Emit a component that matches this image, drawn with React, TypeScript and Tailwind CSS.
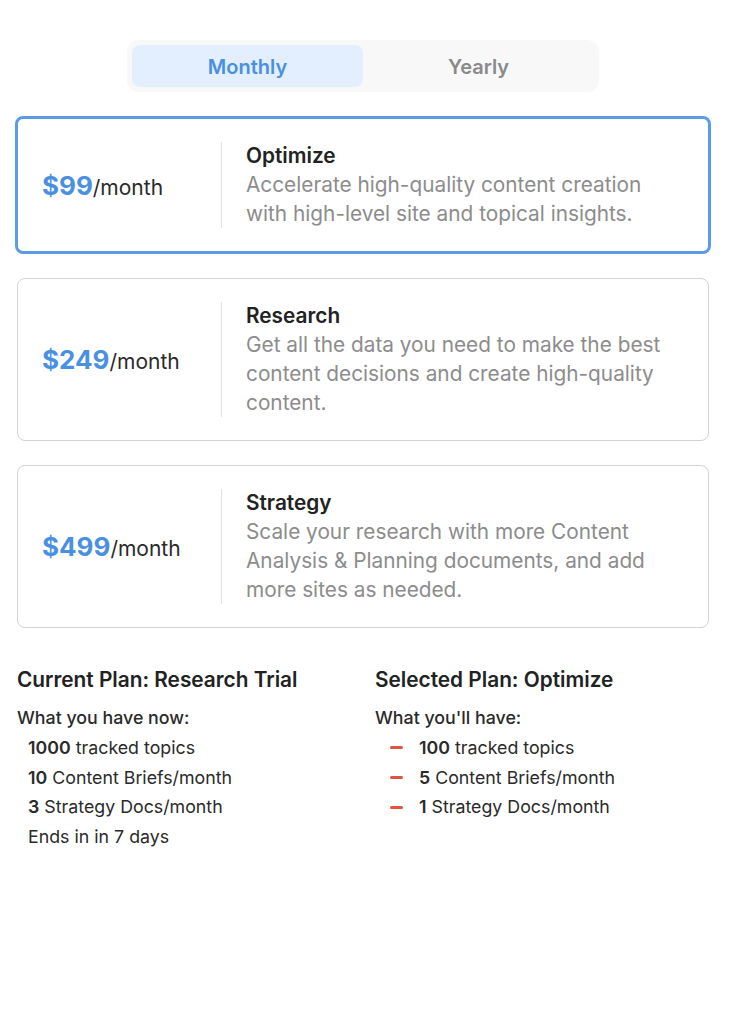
import { useState } from "react";

type Plan = {
  name: string;
  price: string;
  description: string;
};

const plans: Plan[] = [
  {
    name: "Optimize",
    price: "$99",
    description: "Accelerate high-quality content creation with high-level site and topical insights.",
  },
  {
    name: "Research",
    price: "$249",
    description: "Get all the data you need to make the best content decisions and create high-quality content.",
  },
  {
    name: "Strategy",
    price: "$499",
    description:
      "Scale your research with more Content Analysis & Planning documents, and add more sites as needed.",
  },
];

const current = [
  { n: "1000", label: "tracked topics" },
  { n: "10", label: "Content Briefs/month" },
  { n: "3", label: "Strategy Docs/month" },
];

const selected = [
  { n: "100", label: "tracked topics" },
  { n: "5", label: "Content Briefs/month" },
  { n: "1", label: "Strategy Docs/month" },
];

export default function App() {
  const [period, setPeriod] = useState<"monthly" | "yearly">("monthly");
  const [active, setActive] = useState("Optimize");

  return (
    <div className="min-h-screen bg-white font-['Inter','Liberation_Sans',sans-serif] text-[#2a2a2a]">
      <div className="w-[692px] ml-[17px] pt-[40px]">
        {/* Billing toggle */}
        <div className="mx-auto w-[472px] h-[52px] rounded-[12px] bg-[#f8f8f8] p-[5px] flex">
          <button
            className={`flex-1 rounded-[8px] text-[20px] font-semibold pt-[2px] ${
              period === "monthly" ? "bg-[#e3efff] text-[#4a90e2]" : "text-[#8a8a8a]"
            }`}
            onClick={() => setPeriod("monthly")}
          >
            Monthly
          </button>
          <button
            className={`flex-1 rounded-[8px] text-[20px] font-semibold pt-[2px] ${
              period === "yearly" ? "bg-[#e3efff] text-[#4a90e2]" : "text-[#8a8a8a]"
            }`}
            onClick={() => setPeriod("yearly")}
          >
            Yearly
          </button>
        </div>

        {/* Plan cards */}
        <div className="mt-[24px] flex flex-col gap-[24px]">
          {plans.map((plan) => {
            const isActive = plan.name === active;
            return (
              <div
                key={plan.name}
                onClick={() => setActive(plan.name)}
                className={`flex items-center rounded-[8px] bg-white cursor-pointer ${
                  isActive
                    ? "border-[3px] border-[#5b9be8] -mx-[2px] py-[23px] pl-[24px]"
                    : "border-[1.5px] border-[#d3d3d3] py-[23px] pl-[24px]"
                }`}
              >
                <div className="w-[179px] shrink-0 whitespace-nowrap">
                  <span className="text-[26px] font-bold text-[#4a90e2]">{plan.price}</span>
                  <span className="text-[21px] text-[#2a2a2a]">/month</span>
                </div>
                <div className="self-stretch w-px bg-[#e2e2e2] shrink-0" />
                <div className="pl-[24px] pr-[40px]">
                  <div className="text-[20.8px] font-semibold leading-[28px] text-[#222]">{plan.name}</div>
                  <p className="text-[20.8px] leading-[29px] text-[#8c8c8c]">{plan.description}</p>
                </div>
              </div>
            );
          })}
        </div>

        {/* Plan comparison */}
        <div className="mt-[38px] grid grid-cols-2 gap-[24px]">
          <div>
            <h3 className="text-[20.8px] font-semibold leading-[28px] text-[#222]">Current Plan: Research Trial</h3>
            <div className="mt-[11px] text-[17.8px] font-medium leading-[26px]">What you have now:</div>
            <ul className="mt-[2px] pl-[11px] text-[17.8px] leading-[29.7px]">
              {current.map((item) => (
                <li key={item.label}>
                  <span className="font-semibold">{item.n}</span> {item.label}
                </li>
              ))}
              <li>Ends in in 7 days</li>
            </ul>
          </div>
          <div>
            <h3 className="text-[20.8px] font-semibold leading-[28px] text-[#222]">Selected Plan: Optimize</h3>
            <div className="mt-[11px] text-[17.8px] font-medium leading-[26px]">What you'll have:</div>
            <ul className="mt-[2px] pl-[15px] text-[17.8px] leading-[29.7px]">
              {selected.map((item) => (
                <li key={item.label} className="flex items-center">
                  <span className="w-[13px] h-[3px] bg-[#e0553f] rounded-sm mr-[16px]" />
                  <span>
                    <span className="font-semibold">{item.n}</span> {item.label}
                  </span>
                </li>
              ))}
            </ul>
          </div>
        </div>
      </div>
    </div>
  );
}
